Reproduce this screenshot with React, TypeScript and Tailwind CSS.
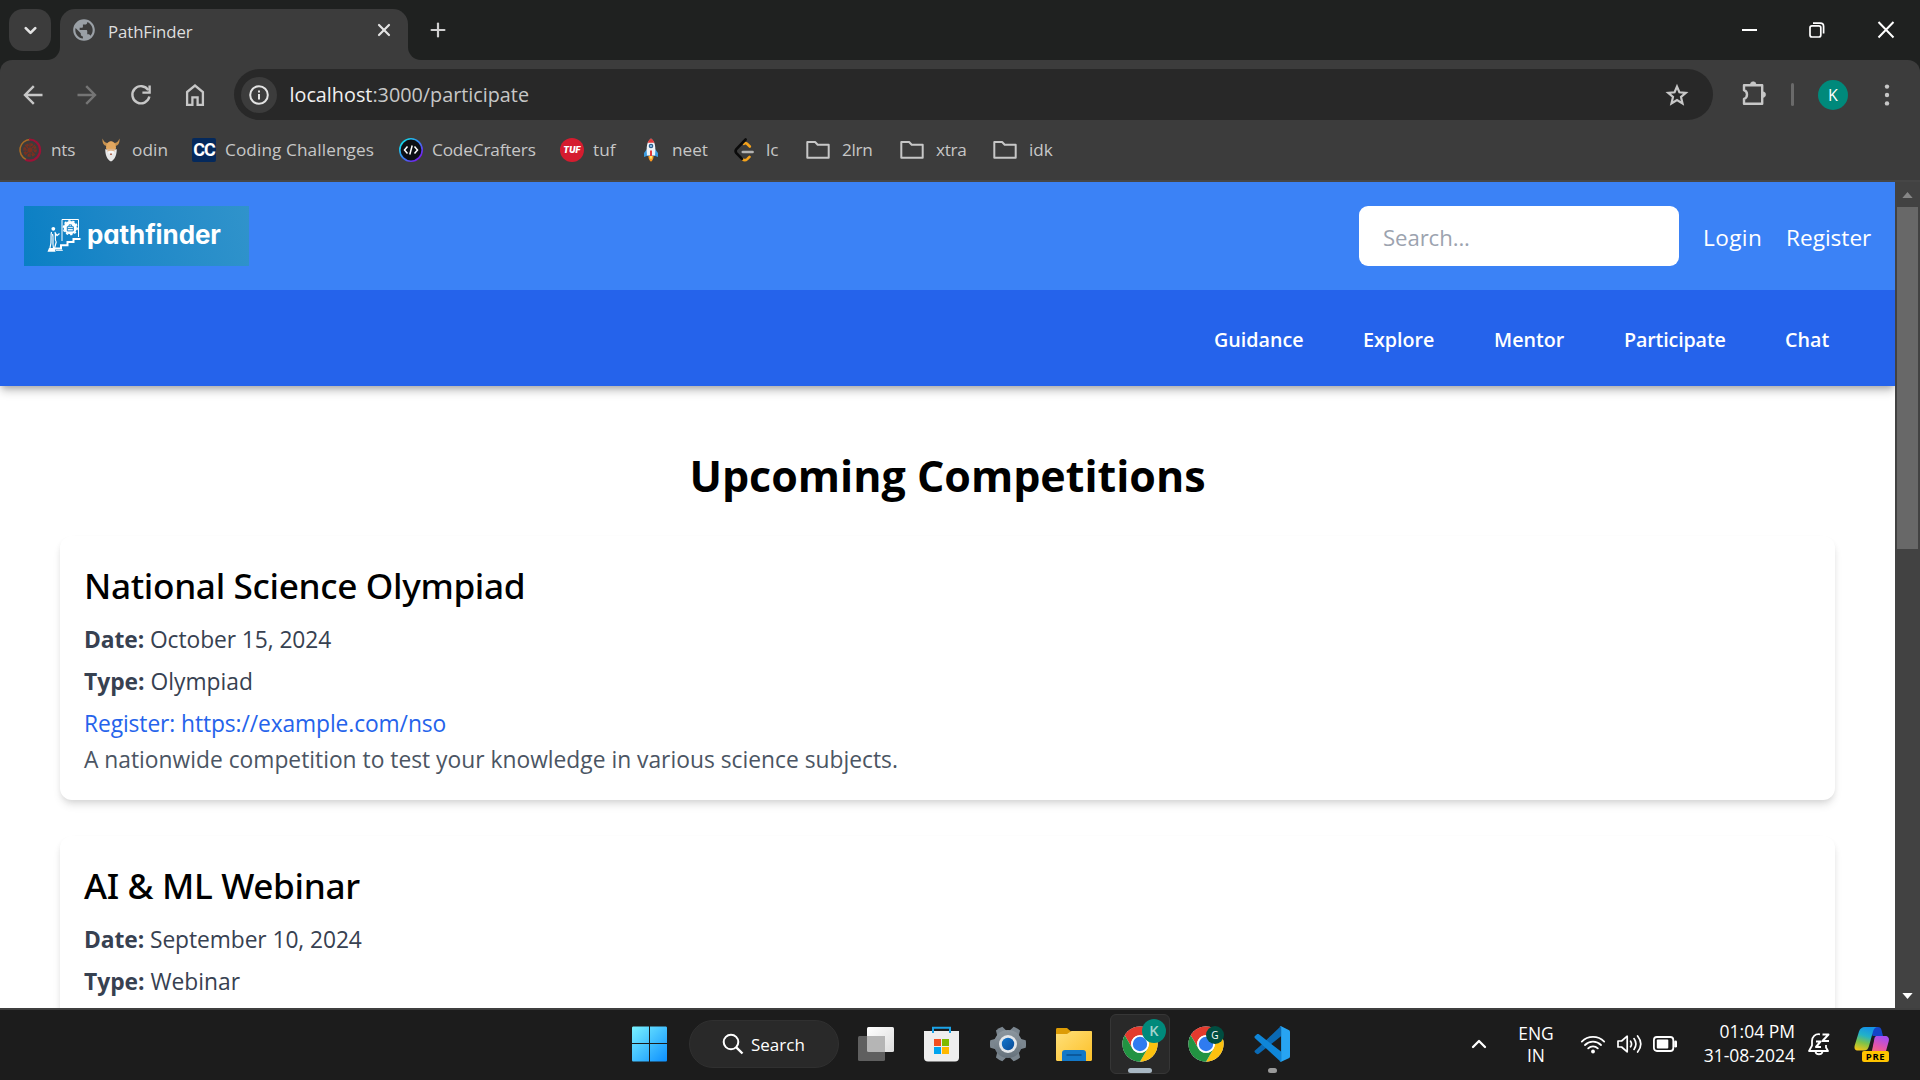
import React from "react";
import { ChevronDown, ChevronUp, Plus, X } from "lucide-react";
import { MdPublic } from "react-icons/md";

/* ---------- Browser toolbar icons ---------- */

const BackIcon = ({ className }: { className: string }) => (
  <svg viewBox="0 0 24 24" className={className} fill="none" stroke="currentColor" strokeWidth="2.4">
    <path d="M21.5 12H4.5M12.8 3.2 4 12l8.8 8.8" />
  </svg>
);

const ReloadIcon = () => (
  <svg viewBox="0 0 24 24" className="size-6 text-[#c7c7c7]" fill="none" stroke="currentColor" strokeWidth="2.4">
    <path d="M19.3 7.2A8.6 8.6 0 1 0 20.4 13.6" />
    <path d="M20.6 2.6V9.6H13.4" />
  </svg>
);

const HomeIcon = () => (
  <svg viewBox="0 0 24 24" className="size-6 text-[#c7c7c7]" fill="none" stroke="currentColor" strokeWidth="2.3">
    <path d="M4.1 9 12 2.6 19.9 9V21.8H14.6V14.4H9.4V21.8H4.1Z" />
  </svg>
);

const InfoIcon = () => (
  <svg viewBox="0 0 24 24" className="size-6 text-[#e3e3e3]" fill="none" stroke="currentColor">
    <circle cx="12" cy="12" r="8.8" strokeWidth="2" />
    <path d="M12 11v5.5M12 7.4v2" strokeWidth="2" />
  </svg>
);

const StarIcon = () => (
  <svg viewBox="0 0 24 24" className="size-6 text-[#c7c7c7]" fill="none" stroke="currentColor" strokeWidth="2.2">
    <path d="M12 3.6 14.4 9.3 20.8 9.8 16 14 17.5 20.4 12 17 6.5 20.4 8 14 3.2 9.8 9.6 9.3Z" />
  </svg>
);

const PuzzleIcon = () => (
  <svg viewBox="0 0 28 28" className="size-7 text-[#c7c7c7]" fill="none" stroke="currentColor" strokeWidth="2.4" strokeLinejoin="round">
    <path d="M4 5.2H22.2V23.8H4V18.800C8 17.5 8 11.5 4 10.2Z" />
    <path d="M10.4 4.5a2.8 2.8 0 0 1 5.6 0zM22.8 11.8a2.8 2.8 0 0 1 0 5.6z" fill="currentColor" strokeWidth="0.6" />
  </svg>
);

const DotsIcon = () => (
  <svg viewBox="0 0 24 24" className="size-6" fill="#c7c7c7">
    <circle cx="12" cy="3.6" r="2.2" />
    <circle cx="12" cy="12" r="2.2" />
    <circle cx="12" cy="20.4" r="2.2" />
  </svg>
);

/* ---------- Bookmark icons ---------- */

const NtsIcon = () => (
  <svg viewBox="0 0 24 24" className="size-6" fill="none">
    <path d="M12 1.5a10.5 10.5 0 0 0-4 20" stroke="#a86a24" strokeWidth="1.6" />
    <path d="M11 1.5a10.5 10.5 0 0 1 1 21.2c-2 0-3-.3-4.5-1" stroke="#9c1236" strokeWidth="2.2" />
    <circle cx="12" cy="12" r="5.5" stroke="#7a3020" strokeWidth="2.6" strokeDasharray="2.3 2" />
    <circle cx="12" cy="12" r="2" fill="#8a2a2a" />
    <path d="M12 5v14M5 12h14M7 7l10 10M17 7 7 17" stroke="#7a3020" strokeWidth="1.1" />
  </svg>
);

const OdinIcon = () => (
  <svg viewBox="0 0 24 24" className="size-6">
    <path d="M3.5.5C3 5 5 8 8 8l1-3C6 5 4.5 3 3.5.5ZM20.5.5C21 5 19 8 16 8l-1-3c3 0 4.5-2 5.5-4.5Z" fill="#c8924f" />
    <path d="M7 10c0-9 10-9 10 0l-1 3H8Z" fill="#e2a75f" />
    <path d="M6.3 11c2 1.5 9.4 1.5 11.4 0 .3 5-1.7 11-5.7 12.500C8 22 6 16 6.3 11Z" fill="#e6e6e6" />
    <path d="M8.5 10.8h7v3.2h-7z" fill="#e0b58c" />
    <path d="M8.5 13.500c2-1 5-1 7 0l-1 2h-5Z" fill="#f5f5f5" />
    <path d="M11 15.5h2v1.5h-2z" fill="#b06a55" />
  </svg>
);

const CodingChallengesIcon = () => (
  <span className="flex size-6 items-center justify-center rounded-[2px] bg-[#04295c] font-['Roboto'] text-[18px] leading-none font-bold tracking-[-1px] text-white">
    CC
  </span>
);

const CodeCraftersIcon = () => (
  <svg viewBox="0 0 24 24" className="size-6" fill="none">
    <defs>
      <linearGradient id="crafters-ring" x1="0" y1="0" x2="1" y2="1">
        <stop offset="0.15" stopColor="#17d3e8" />
        <stop offset="0.55" stopColor="#3f74f0" />
        <stop offset="0.9" stopColor="#7a16f0" />
      </linearGradient>
    </defs>
    <circle cx="12" cy="12" r="11.2" fill="#0d0f14" stroke="url(#crafters-ring)" strokeWidth="1.6" />
    <path d="M8.5 8.5 5.5 12l3 3.5M15.5 8.5l3 3.5-3 3.5M13.2 7.5 10.8 16.5" stroke="#fff" strokeWidth="1.5" />
  </svg>
);

const TufIcon = () => (
  <span className="flex size-6 items-center justify-center rounded-full bg-[#d51c2f] font-['Inter'] text-[8.5px] leading-none font-black tracking-[0.2px] text-white italic">
    TUF
  </span>
);

const RocketIcon = () => (
  <svg viewBox="0 0 24 24" className="size-6">
    <path d="M8 11 5 15v4l4-1.5h6L19 19v-4l-3-4Z" fill="#3a9be0" />
    <path d="M12 .5c4 3 5 8 4 17H8C7 8.5 8 3.5 12 .5Z" fill="#eef3f8" />
    <path d="M12 .5c1.8 1.2 2.8 2.5 3.3 4.2H8.700C9.2 3 10.2 1.7 12 .5Z" fill="#e33b3b" />
    <circle cx="12" cy="8" r="2.3" fill="#2b5d8c" />
    <circle cx="12" cy="8" r="1.1" fill="#8cc4ee" />
    <path d="M11 12.5h2V19h-2z" fill="#e33b3b" />
    <path d="M9.5 18h5c.3 2.5-1 4.5-2.5 5.7-1.5-1.2-2.8-3.2-2.5-5.7Z" fill="#ff9a1f" />
    <path d="M10.8 18h2.4c0 1.5-.4 2.5-1.2 3.3-.8-.8-1.2-1.8-1.2-3.3Z" fill="#ffe066" />
  </svg>
);

const LeetCodeIcon = () => (
  <svg viewBox="0 0 24 24" className="size-6" fill="none" strokeWidth="2.6" strokeLinecap="round" strokeLinejoin="round">
    <path d="M16.8 8.5 14 5.800c-1-.9-2.3-.9-3.2 0M16.5 18.8l-2.3 2.300c-1.5 1.4-3.2 1.4-4.7 0" stroke="#f5a31b" />
    <path d="M12.6 1.5 3.4 11.100c-1 1.2-1 2.8 0 4L9 20.8" stroke="#0b0b0b" />
    <path d="M9.8 14h9.8" stroke="#b3b3b3" />
  </svg>
);

const FolderIcon = () => (
  <svg viewBox="0 0 24 24" className="size-6" fill="none" stroke="#c7c7c7" strokeWidth="2" strokeLinejoin="round">
    <path d="M1.3 4h7.8l2.6 2.700h11v13.100H1.3Z" />
  </svg>
);

const bookmarks = [
  { label: "nts", icon: <NtsIcon />, box: "w-[81px]", text: "tracking-[-0.2px]" },
  { label: "odin", icon: <OdinIcon />, box: "w-[93px]", text: "tracking-[0.1px]" },
  { label: "Coding Challenges", icon: <CodingChallengesIcon />, box: "w-[207px]", text: "tracking-[0.1px]" },
  { label: "CodeCrafters", icon: <CodeCraftersIcon />, box: "w-[161px]", text: "tracking-[-0.15px]" },
  { label: "tuf", icon: <TufIcon />, box: "w-[79px]", text: "" },
  { label: "neet", icon: <RocketIcon />, box: "w-[94px]", text: "" },
  { label: "lc", icon: <LeetCodeIcon />, box: "w-[73px]", text: "" },
  { label: "2lrn", icon: <FolderIcon />, box: "w-[94px]", text: "pl-[3px] tracking-[-0.3px]" },
  { label: "xtra", icon: <FolderIcon />, box: "w-[93px]", text: "pl-[3px] tracking-[-0.3px]" },
  { label: "idk", icon: <FolderIcon />, box: "w-[60px]", text: "pl-[3px]" },
];

/* ---------- Browser chrome ---------- */

function TabStrip() {
  return (
    <div className="flex h-[60px] bg-[#1f2120]">
      <div className="mt-[9px] ml-[9px] flex h-[42px] w-[42px] items-center justify-center rounded-[14px] bg-[#3c3c3c] text-[#e3e3e3]">
        <ChevronDown size={19} strokeWidth={3.4} />
      </div>
      <div className="-ml-[4px] size-[13px] self-end bg-[#3c3c3c]">
        <div className="size-full rounded-br-[13px] bg-[#1f2120]" />
      </div>
      <div className="mt-[9px] flex w-[348px] items-center rounded-t-[15px] bg-[#3c3c3c] pr-[14px] pb-[9px] pl-[11px]">
        <MdPublic className="size-[26px] text-[#9aa0a6]" />
        <span className="mt-[3px] ml-[11px] grow text-[16.8px] leading-6 tracking-[-0.08px] text-[#dfdfdf]">PathFinder</span>
        <X size={20} strokeWidth={2.6} className="text-[#e3e3e3]" />
      </div>
      <div className="size-[13px] self-end bg-[#3c3c3c]">
        <div className="size-full rounded-bl-[13px] bg-[#1f2120]" />
      </div>
      <Plus size={22} strokeWidth={2.4} className="mt-[19px] ml-[6px] text-[#d0d0d0]" />
      <div className="ml-auto flex h-[60px] items-center pr-[22px] text-white">
        <div className="mr-[52px] h-[2px] w-[15px] bg-white" />
        <svg viewBox="0 0 16 16" className="mr-[49px] size-4" fill="none" stroke="currentColor" strokeWidth="1.7">
          <rect x="1" y="3.8" width="10.8" height="11.2" rx="2" />
          <path d="M4 1.2h7.200c2 0 3.4 1.3 3.4 3.3v7" />
        </svg>
        <svg viewBox="0 0 24 24" className="size-6" fill="none" stroke="currentColor" strokeWidth="2">
          <path d="M4.5 4 19.5 19.500M19.5 4 4.5 19.5" />
        </svg>
      </div>
    </div>
  );
}

function Toolbar() {
  return (
    <div className="bg-[#1f2120]">
      <div className="h-[120px] rounded-t-[12px] bg-[#3c3c3c]">
        <div className="flex h-[69px] items-center">
          <div className="flex w-[234px] items-center gap-[30px] pl-[21px]">
            <BackIcon className="size-6 text-[#c7c7c7]" />
            <BackIcon className="size-6 rotate-180 text-[#757575]" />
            <ReloadIcon />
            <HomeIcon />
          </div>
          <div className="flex h-[51px] w-[1479px] items-center rounded-full bg-[#282828] pr-[24px] pl-[7px]">
            <div className="flex size-[36px] items-center justify-center rounded-full bg-[#3c3c3c]">
              <InfoIcon />
            </div>
            <span className="ml-[12.5px] grow text-[19.8px] leading-7 text-[#c7c7c7]">
              <span className="text-[#f0f0f0]">localhost</span>:3000/participate
            </span>
            <StarIcon />
          </div>
          <div className="ml-[27px] pb-[2px]">
            <PuzzleIcon />
          </div>
          <div className="ml-[23px] h-[23px] w-[3px] rounded bg-[#6a6a6a]" />
          <div className="ml-[24px] flex size-[30px] items-center justify-center rounded-full bg-[#00897b] text-[16px] leading-none text-white">
            K
          </div>
          <div className="ml-[27px]">
            <DotsIcon />
          </div>
        </div>
        <div className="flex h-[42px] items-center pl-[18px] text-[17.2px] leading-6 text-[#c7c7c7]">
          {bookmarks.map((b) => (
            <div key={b.label} className={`flex shrink-0 items-center gap-[9px] ${b.box}`}>
              {b.icon}
              <span className={`whitespace-nowrap ${b.text}`}>{b.label}</span>
            </div>
          ))}
        </div>
      </div>
    </div>
  );
}

/* ---------- Web page ---------- */

function BrandLogo() {
  return (
    <div className="flex h-[60px] w-[225px] items-center bg-linear-[75deg,#0a7fc4,#1f88c8_45%,#3093cb] pl-[23px]">
      <svg viewBox="48 216 36 36" className="mb-[3px] size-9" fill="none" stroke="#fff" strokeWidth="1">
        <path d="M63 240V218.500H79.5V236" />
        <circle cx="71.3" cy="226.7" r="5.6" strokeWidth="2" fill="#fff" />
        <circle cx="71.3" cy="226.7" r="6.9" strokeWidth="1.5" strokeDasharray="2.4 1.9" />
        <path d="M68.3 225.700h6v4.200h-6zM68.3 227.600h6M70 225.500v-1.600h2.600v1.600" stroke="#1a84c6" strokeWidth="1" />
        <path d="M56 247.500h6v-3.200h6.500v-3.200h6v-3h7" strokeWidth="2" />
        <path d="M57 249.300h6.800" />
        <circle cx="54.3" cy="227.8" r="1.9" fill="#fff" stroke="none" />
        <path d="M52.5 231c-1.5 5 1 8-1.5 16M56 231c1.5 4-1 7 1.2 10l-1.6 6M56 231.500l2 3 2.500-2M53.5 233c1.5 4-.5 8 1 14" strokeWidth="1.2" />
        <path d="M48.5 250.800 50 247h6l.5 3.800Z" fill="#fff" stroke="none" />
      </svg>
      <span className="-mt-[3px] ml-[4px] font-['Inter'] text-[26px] leading-none font-bold tracking-[-0.1px] text-white [font-feature-settings:'cv11']">
        pathfinder
      </span>
    </div>
  );
}

const navItems = [
  { label: "Guidance", box: "w-[149px]" },
  { label: "Explore", box: "w-[131px]" },
  { label: "Mentor", box: "w-[130px]" },
  { label: "Participate", box: "w-[161px] tracking-[-0.15px]" },
  { label: "Chat", box: "w-[110px]" },
];

function SiteHeader() {
  return (
    <header className="shadow-[0_6px_9px_-1px_rgba(0,0,0,0.22),0_3px_6px_-2px_rgba(0,0,0,0.2)]">
      <div className="flex h-[108px] items-center bg-[#3b82f6] px-6">
        <BrandLogo />
        <div className="ml-auto flex items-center text-[22.6px] text-white">
          <div className="flex h-[60px] w-[320px] items-center rounded-[9px] bg-white px-6 pt-[4px] text-[22.2px] tracking-[-0.1px] text-[#9ca3af]">
            Search...
          </div>
          <a className="ml-[24px] w-[83px] pt-[4px] tracking-[0.4px]">Login</a>
          <a className="w-[85px] pt-[4px]">Register</a>
        </div>
      </div>
      <nav className="flex h-[96px] items-center justify-end bg-[#2563eb] pt-[4px] text-[19.7px] font-semibold text-white">
        {navItems.map((n) => (
          <a key={n.label} className={n.box}>
            {n.label}
          </a>
        ))}
      </nav>
    </header>
  );
}

type Competition = { title: string; date: string; type: string; link?: string; description?: string };

const competitions: Competition[] = [
  {
    title: "National Science Olympiad",
    date: "October 15, 2024",
    type: "Olympiad",
    link: "https://example.com/nso",
    description: "A nationwide competition to test your knowledge in various science subjects.",
  },
  {
    title: "AI & ML Webinar",
    date: "September 10, 2024",
    type: "Webinar",
  },
];

function CompetitionCard({ item }: { item: Competition }) {
  return (
    <article className="mb-9 h-[264px] rounded-[12px] bg-white px-6 pt-[25px] text-[22.8px] leading-9 shadow-[0_6px_9px_-1px_rgba(0,0,0,0.1),0_3px_6px_-2px_rgba(0,0,0,0.1)]">
      <h2 className="mb-[13px] font-['Noto_Sans'] text-[35.2px] leading-[48px] font-medium tracking-[-0.35px] text-black">{item.title}</h2>
      <p className="mb-1.5 tracking-[-0.08px] text-[#374151]">
        <strong className="font-bold">Date:</strong> {item.date}
      </p>
      <p className="mb-1.5 text-[#374151]">
        <strong className="font-bold">Type:</strong> {item.type}
      </p>
      {item.link && <a className="block tracking-[-0.1px] text-[#2563eb]">Register: {item.link}</a>}
      {item.description && <p className="text-[#4b5563]">{item.description}</p>}
    </article>
  );
}

function Scrollbar() {
  return (
    <div className="flex w-[25px] flex-col items-center bg-[#424242]">
      <svg viewBox="0 0 12 7" className="mt-[10px] h-[6px] w-[11px]" fill="#868686">
        <path d="M6 0 12 7H0Z" />
      </svg>
      <div className="mt-[9px] h-[342px] w-[21px] bg-[#686868]" />
      <svg viewBox="0 0 12 7" className="mt-auto mb-[9px] h-[6px] w-[11px]" fill="#fff">
        <path d="M6 7 12 0H0Z" />
      </svg>
    </div>
  );
}

/* ---------- Taskbar ---------- */

const StartIcon = () => (
  <svg viewBox="0 0 36 36" className="size-9">
    <defs>
      <linearGradient id="start" x1="0" y1="0" x2="36" y2="36" gradientUnits="userSpaceOnUse">
        <stop offset="0" stopColor="#7af3ff" />
        <stop offset="1" stopColor="#0a8dff" />
      </linearGradient>
    </defs>
    <path d="M1.500.5H17V17H0V2C0 1 .5.500 1.500.500ZM18 .5h15.500c1 0 1.500.5 1.500 1.500v15H18ZM0 18h17v17.500H1.500C.5 35.500 0 35 0 34ZM18 18h17v16c0 1-.5 1.500-1.500 1.500H18Z" fill="url(#start)" />
  </svg>
);

const TaskViewIcon = () => (
  <svg viewBox="0 0 36 36" className="size-9">
    <defs>
      <linearGradient id="tv-front" x1="0" y1="0" x2="1" y2="1">
        <stop offset="0" stopColor="#fff" />
        <stop offset="1" stopColor="#dcdcdc" />
      </linearGradient>
    </defs>
    <rect x="9" y="1" width="27" height="25" rx="1.5" fill="url(#tv-front)" />
    <rect x="0" y="10" width="27" height="25" rx="1.5" fill="#5f5f5f" />
    <path d="M9 10h18v16H10.500A1.5 1.5 0 0 1 9 24.500Z" fill="#b5b5b5" />
  </svg>
);

const StoreIcon = () => (
  <svg viewBox="0 0 36 36" className="size-9">
    <path d="M0 5h35v26.500a4 4 0 0 1-4 4H4a4 4 0 0 1-4-4Z" fill="#eeeeee" />
    <path d="M9 7V1.700h17V7" fill="none" stroke="#1ba3e8" strokeWidth="2" />
    <path d="M10 13h7v7h-7z" fill="#f25022" />
    <path d="M18 13h7v7h-7z" fill="#7fba00" />
    <path d="M10 21h7v7h-7z" fill="#00a4ef" />
    <path d="M18 21h7v7h-7z" fill="#ffb900" />
  </svg>
);

const teeth = [0, 60, 120, 180, 240, 300];

const SettingsIcon = () => (
  <svg viewBox="0 0 36 36" className="size-9">
    <defs>
      <linearGradient id="gear" x1="0" y1="0" x2="0" y2="1">
        <stop offset="0" stopColor="#8d979f" />
        <stop offset="1" stopColor="#66727c" />
      </linearGradient>
      <linearGradient id="gear-eye" x1="0" y1="0" x2="1" y2="1">
        <stop offset="0" stopColor="#1377cf" />
        <stop offset="1" stopColor="#0a4a94" />
      </linearGradient>
    </defs>
    {teeth.map((a) => (
      <path key={a} transform={`rotate(${a + 30} 18 18)`} d="M14.300.3Q18-.500 21.700.3L23.500 6.500H12.500Z" fill="#7b868f" />
    ))}
    <circle cx="18" cy="18" r="14" fill="url(#gear)" />
    <circle cx="18" cy="18" r="9" fill="#e4e7ea" />
    <circle cx="18" cy="18" r="6.2" fill="url(#gear-eye)" />
  </svg>
);

const ExplorerIcon = () => (
  <svg viewBox="0 0 36 36" className="size-9">
    <defs>
      <linearGradient id="folder" x1="0" y1="0" x2="1" y2="1">
        <stop offset="0" stopColor="#ffe07a" />
        <stop offset="1" stopColor="#fcc028" />
      </linearGradient>
    </defs>
    <path d="M0 3.500C0 2.500.5 2 1.500 2H11l4 3.500V12H0Z" fill="#dd9c05" />
    <path d="M0 8h11l4.500-3H35c.6 0 1 .4 1 1v27.500c0 .8-.5 1.500-1.500 1.500h-33C.5 35 0 34.300 0 33.500Z" fill="url(#folder)" />
    <path d="M6 35V27a3 3 0 0 1 3-3h18a3 3 0 0 1 3 3v8Z" fill="#1378c8" />
    <path d="M11 29h14" stroke="#0a4f8f" strokeWidth="1.5" strokeLinecap="round" />
  </svg>
);

const ChromeLogo = () => (
  <svg viewBox="0 0 48 48" className="size-9">
    <circle cx="24" cy="24" r="23.5" fill="#fff" />
    <path d="M3.650 12.250A23.5 23.5 0 0 1 44.350 12.250H24A11.750 11.750 0 0 0 13.820 29.880Z" fill="#e33b2e" />
    <path d="M44.350 12.250A23.5 23.5 0 0 1 24 47.500L34.180 29.880A11.750 11.750 0 0 0 24 12.250Z" fill="#fcc10f" />
    <path d="M24 47.500A23.5 23.5 0 0 1 3.650 12.250L13.820 29.880A11.750 11.750 0 0 0 34.180 29.880Z" fill="#229342" />
    <circle cx="24" cy="24" r="11.75" fill="#fff" />
    <circle cx="24" cy="24" r="9.6" fill="#2f7bf0" />
  </svg>
);

const VSCodeIcon = () => (
  <svg viewBox="0 0 36 36" className="size-9">
    <path d="M27 0 5.500 20.500 1.500 24c-1.300.8-1.300 1.600-.5 2.400l1.600 1.300c.8.6 1.400.6 2.200 0L27 10.300Z" fill="#0a6ab5" />
    <path d="M27 36 1 12.200c-.8-.8-.8-1.600 0-2.300l1.700-1.500c.7-.6 1.500-.6 2.200-.1L27 25.500Z" fill="#0f86d8" />
    <path d="M25.500 35.700c.5.3 1.100.3 1.700.1l7.500-3.600c.8-.4 1.300-1.100 1.300-2V5.900c0-.9-.5-1.700-1.300-2L27.200.2c-.7-.3-1.300-.2-1.700.1.800-.2 1.600.4 1.600 1.300v32.800c0 .9-.8 1.500-1.600 1.300Z" fill="#27a4f2" />
  </svg>
);

const CopilotIcon = () => (
  <svg viewBox="0 0 36 36" className="size-9">
    <defs>
      <linearGradient id="cp-left" x1="0.5" y1="0" x2="0.2" y2="1">
        <stop offset="0" stopColor="#1593e6" />
        <stop offset="0.35" stopColor="#22b2c8" />
        <stop offset="0.65" stopColor="#7cc24a" />
        <stop offset="1" stopColor="#f4c416" />
      </linearGradient>
      <linearGradient id="cp-right" x1="0.6" y1="0" x2="0.2" y2="1">
        <stop offset="0" stopColor="#a84df0" />
        <stop offset="0.5" stopColor="#e455a8" />
        <stop offset="1" stopColor="#fb7c58" />
      </linearGradient>
    </defs>
    <path d="M12 1h12c2 0 3 1.200 3.500 3l1.500 6h-4c-3 0-4 1-5 4L18 8Z" fill="#1445c8" />
    <path d="M11 1h13c-3 0-4 1.500-5 4.500l-4 14.500c-1 3-2 4.500-5 4.500H4c-3 0-4-2-3.300-5L5 5.500C6 2.500 8 1 11 1Z" fill="url(#cp-left)" />
    <path d="M22.500 10H31c3 0 4.500 2 3.800 5L32 25c-1 3-2.500 4.500-5.500 4.500H13c3 0 4-2 5-5l2-10c.6-3 1-4.500 2.500-4.500Z" fill="url(#cp-right)" />
    <path d="M19 10h3c-1.500 1-2 2-2.500 4.500L17.500 24.500h-3c1-1 1.500-2.500 2-4.500Z" fill="#1c1c1c" />
  </svg>
);

function Slot({ children, active = false }: { children: React.ReactNode; active?: boolean }) {
  return (
    <div
      className={
        active
          ? "relative flex size-[60px] items-center justify-center rounded-[6px] border border-[#363636] bg-[#292929]"
          : "relative flex size-[60px] items-center justify-center"
      }
    >
      {children}
    </div>
  );
}

function Taskbar() {
  return (
    <footer className="flex h-[70px] items-center bg-[#1c1c1c] pb-[2px] pl-[620px] text-white">
      <Slot>
        <StartIcon />
      </Slot>
      <div className="ml-[9px] flex h-[48px] w-[150px] items-center rounded-full border border-[#303030] bg-[#292929] pl-[32px]">
        <svg viewBox="0 0 22 22" className="size-[22px]" fill="none" stroke="#fff" strokeWidth="2">
          <circle cx="9" cy="9" r="7.3" />
          <path d="M14.300 14.300 20.500 20.500" strokeWidth="2.4" />
        </svg>
        <span className="mt-[2px] ml-[7px] text-[17px] leading-6">Search</span>
      </div>
      <div className="ml-[7px] flex gap-[6px]">
        <Slot>
          <TaskViewIcon />
        </Slot>
        <Slot>
          <StoreIcon />
        </Slot>
        <Slot>
          <SettingsIcon />
        </Slot>
        <Slot>
          <ExplorerIcon />
        </Slot>
        <Slot active>
          <ChromeLogo />
          <span className="absolute top-[4px] right-[3px] flex size-6 items-center justify-center rounded-full bg-[#00897b] text-[14.5px] leading-none font-semibold text-[#a3d3ce]">
            K
          </span>
          <span className="absolute bottom-0 left-[17px] h-[5px] w-[24px] rounded-full bg-[#a9b8c4]" />
        </Slot>
        <Slot>
          <ChromeLogo />
          <span className="absolute top-[12px] right-[12px] flex size-[18px] items-center justify-center rounded-full bg-[#004d40] text-[10px] leading-none text-white">
            G
          </span>
        </Slot>
        <Slot>
          <VSCodeIcon />
          <span className="absolute bottom-[1px] left-[26px] h-[5px] w-[9px] rounded-full bg-[#9a9a9a]" />
        </Slot>
      </div>
      <div className="ml-auto flex h-full items-center text-[17.5px] leading-6">
        <ChevronUp size={24} strokeWidth={2.3} className="mr-[27px]" />
        <div className="mr-[26px] w-[36px] text-center text-[17.4px] leading-[22px]">
          <div>ENG</div>
          <div>IN</div>
        </div>
        <svg viewBox="0 0 26 22" className="mr-[10px] h-[22px] w-[26px]" fill="none" stroke="#fff" strokeWidth="1.8" strokeLinecap="round">
          <path d="M1.800 8.600a15.800 15.800 0 0 1 22.400 0M5 12a11.300 11.300 0 0 1 16 0M8.200 15.300a6.800 6.800 0 0 1 9.600 0" />
          <circle cx="13" cy="18.5" r="1.9" fill="#fff" stroke="none" />
        </svg>
        <svg viewBox="0 0 26 22" className="mr-[10px] h-[22px] w-[26px]" fill="none" stroke="#fff" strokeWidth="1.7" strokeLinecap="round" strokeLinejoin="round">
          <path d="M2 8h3.600l5.600-4.800v15.600L5.600 14H2ZM14.600 8.200c1.200 1.800 1.200 3.800 0 5.600M18 5.600c2.500 3.500 2.500 7.300 0 10.800M21.600 3c4 5 4 11 0 16" />
        </svg>
        <svg viewBox="0 0 26 22" className="h-[22px] w-[26px]" fill="none" stroke="#fff" strokeWidth="1.8">
          <rect x="1.9" y="4" width="19.4" height="14" rx="3" />
          <rect x="4.8" y="6.5" width="11.5" height="9" rx="1" fill="#fff" stroke="none" />
          <path d="M23.600 8.800v4.400" strokeWidth="2.8" strokeLinecap="round" />
        </svg>
        <div className="ml-[18px] w-[99px] text-right whitespace-nowrap">
          <div className="-mt-[2px]">01:04 PM</div>
          <div>31-08-2024</div>
        </div>
        <svg viewBox="0 0 24 24" className="ml-[12px] size-6" fill="none" stroke="#fff" strokeWidth="1.8" strokeLinejoin="round">
          <path d="M13 2.300C8 1.500 5 5 5 9v4.500L2 19h19l-2-3.500v-2.500M8.500 20c.8 3 6 3 7 0" />
          <path d="M9 9.500h4.500L9 15h5M15.500 2.500h6L15.500 9h6.500" strokeWidth="2" />
        </svg>
        <div className="relative mr-[30px] ml-[23px] size-9">
          <CopilotIcon />
          <span className="absolute top-[25px] left-[8px] flex h-[11px] w-[27px] items-center justify-center rounded-[2px] bg-[#ffc400] text-[9.5px] leading-none font-bold tracking-[0.6px] text-black">
            PRE
          </span>
        </div>
      </div>
    </footer>
  );
}

export default function App() {
  return (
    <div className="flex h-[1080px] w-[1920px] flex-col overflow-hidden bg-white font-['Open_Sans',sans-serif]">
      <TabStrip />
      <Toolbar />
      <div className="h-[2px] bg-[#464646]" />
      <div className="flex h-[826px] overflow-hidden">
        <div className="flex h-full w-[1895px] flex-col overflow-hidden bg-white">
          <SiteHeader />
          <main className="px-[60px] pt-[63px]">
            <h1 className="mb-[33px] text-center text-[43px] leading-[54px] font-bold text-black">Upcoming Competitions</h1>
            {competitions.map((c) => (
              <CompetitionCard key={c.title} item={c} />
            ))}
          </main>
        </div>
        <Scrollbar />
      </div>
      <div className="h-[2px] bg-[#3f3f3f]" />
      <Taskbar />
    </div>
  );
}
